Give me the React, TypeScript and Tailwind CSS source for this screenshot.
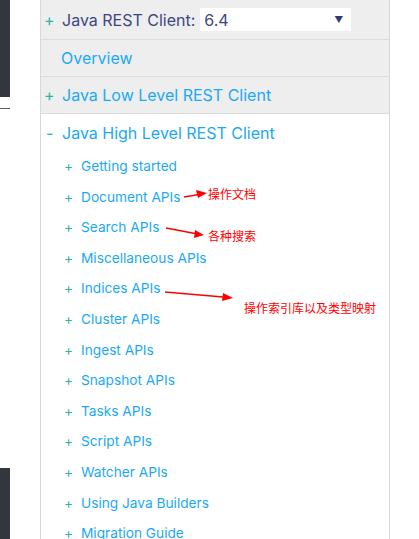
import React from 'react'

const items = [
  'Getting started',
  'Document APIs',
  'Search APIs',
  'Miscellaneous APIs',
  'Indices APIs',
  'Cluster APIs',
  'Ingest APIs',
  'Snapshot APIs',
  'Tasks APIs',
  'Script APIs',
  'Watcher APIs',
  'Using Java Builders',
  'Migration Guide',
]

function Plus({ sign = '+' }: { sign?: string }) {
  return <span className="inline-block w-[17px] text-[#2bb5a5]">{sign}</span>
}

export default function App() {
  return (
    <div className="relative flex h-[539px] w-[419px] overflow-hidden bg-white font-['Inter',sans-serif]">
      {/* left page gutter */}
      <div className="flex w-10 shrink-0 flex-col">
        <div className="h-[97px] w-[10px] shrink-0 bg-[#33353f]" />
        <div className="mt-[11px] h-px w-[10px] shrink-0 bg-[#5a5c66]" />
        <div className="mt-auto h-[71px] w-[10px] shrink-0 bg-[#33353f]" />
      </div>

      {/* nav panel */}
      <div className="flex w-[350px] shrink-0 flex-col border-x border-[#d9d9d9]">
        <div className="flex h-[40px] shrink-0 items-center border-b border-[#dcdcdc] bg-[#eeeeee] pl-[3px] text-[16px] text-[#3d4680]">
          <Plus />
          <span className="ml-[1px]">Java REST Client:</span>
          <div className="ml-[5px] flex h-[23px] w-[151px] items-center justify-between bg-white pl-[4px] pr-[8px]">
            <span className="text-[#3d4680]">6.4</span>
            <span className="text-[9px] text-[#2f3a78]">▼</span>
          </div>
        </div>
        <div className="flex h-[37px] shrink-0 items-center border-b border-[#dcdcdc] bg-[#eeeeee] pl-[20px] text-[16px] text-[#1ba9f5]">
          Overview
        </div>
        <div className="flex h-[37px] shrink-0 items-center border-b border-[#dcdcdc] bg-[#eeeeee] pl-[3px] text-[16px] text-[#1ba9f5]">
          <Plus />
          <span className="ml-[1px]">Java Low Level REST Client</span>
        </div>
        <div className="flex h-[37px] shrink-0 items-center pl-[5px] pt-[1px] text-[16px] text-[#1ba9f5]">
          <span className="inline-block w-[15px] text-[#2bb5a5]">-</span>
          <span className="ml-[1px]">Java High Level REST Client</span>
        </div>
        <ul className="flex shrink-0 flex-col">
          {items.map((it) => (
            <li key={it} className="flex h-[30.6px] shrink-0 items-center pl-[23px] text-[13.7px] text-[#1ba9f5]">
              <Plus />
              <span>{it}</span>
            </li>
          ))}
        </ul>
      </div>

      {/* red annotations */}
      <svg className="pointer-events-none absolute inset-0" width="419" height="539">
        <g stroke="#ff0000" strokeWidth="1.3" fill="#ff0000">
          <line x1="184" y1="197" x2="199" y2="194.5" />
          <polygon points="207,193 196,190 198,198" stroke="none" />
          <line x1="166" y1="228" x2="195" y2="233.5" />
          <polygon points="204,235 195,230 194,238" stroke="none" />
          <line x1="165" y1="292" x2="223" y2="297" />
          <polygon points="233,298 223,293 222,301" stroke="none" />
        </g>
      </svg>
      <span className="absolute left-[208px] top-[186px] text-[12px] leading-[16px] text-[#ff0000] font-['Noto_Sans_CJK_SC',sans-serif]">
        操作文档
      </span>
      <span className="absolute left-[208px] top-[228px] text-[12px] leading-[16px] text-[#ff0000] font-['Noto_Sans_CJK_SC',sans-serif]">
        各种搜索
      </span>
      <span className="absolute left-[244px] top-[300px] text-[12px] leading-[16px] text-[#ff0000] font-['Noto_Sans_CJK_SC',sans-serif]">
        操作索引库以及类型映射
      </span>
    </div>
  )
}
